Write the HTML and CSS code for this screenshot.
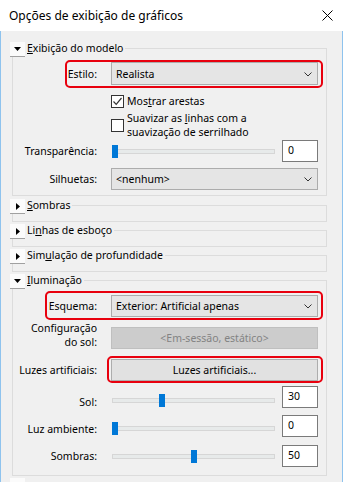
FILE: index.html
```html
<!DOCTYPE html>
<html lang="pt">
<head>
    <meta charset="UTF-8">
    <meta name="viewport" content="width=device-width, initial-scale=1.0">
    <link rel="stylesheet" href="styles.css">

    <title>Opções de exibição de gráficos</title>
</head>
<body>

    <div class="window">
        <div class="title-bar">
            <span class="title">Opções de exibição de gráficos</span>
            <svg class="close" width="11" height="11" viewBox="0 0 11 11">
                <path d="M0.5 0.5 L10.5 10.5 M10.5 0.5 L0.5 10.5" stroke="#000" stroke-width="1" fill="none"/>
            </svg>
        </div>

        <div class="content">

            <!-- Exibição do modelo -->
            <div class="section">
                <div class="section-head">
                    <span class="toggle"><svg width="7" height="4" viewBox="0 0 7 4"><polygon points="0,0 7,0 3.5,4" fill="#000"/></svg></span>
                    <span class="section-title"><u>E</u>xibição do modelo</span>
                    <span class="section-line"></span>
                </div>
                <div class="section-body model-body">
                    <div class="row row-style">
                        <span class="label">Estilo:</span>
                        <div class="dropdown">Realista
                            <svg class="chevron" width="8" height="5" viewBox="0 0 8 5"><path d="M0.5 0.5 L4 4 L7.5 0.5" stroke="#333" fill="none"/></svg>
                        </div>
                        <span class="highlight hl-style"></span>
                    </div>
                    <div class="row row-edges">
                        <span></span>
                        <div class="check">
                            <span class="box"><svg width="11" height="11" viewBox="0 0 11 11"><path d="M1.5 5.5 L4.2 8.3 L9.5 2" stroke="#333" stroke-width="1.2" fill="none"/></svg></span>
                            <span>Mos<u>t</u>rar arestas</span>
                        </div>
                    </div>
                    <div class="row row-smooth">
                        <span></span>
                        <div class="check">
                            <span class="box"></span>
                            <span class="two-lines">Suavizar as <u>l</u>inhas com a<br>suavização de serrilhado</span>
                        </div>
                    </div>
                    <div class="row row-slider row-transp">
                        <span class="label">Transparência:</span>
                        <div class="slider-group">
                            <div class="slider"><span class="track"></span><span class="thumb" style="--value: 0"></span></div>
                            <div class="textbox">0</div>
                        </div>
                    </div>
                    <div class="row row-silh">
                        <span class="label">Silhuetas:</span>
                        <div class="dropdown">&lt;nenhum&gt;
                            <svg class="chevron" width="8" height="5" viewBox="0 0 8 5"><path d="M0.5 0.5 L4 4 L7.5 0.5" stroke="#333" fill="none"/></svg>
                        </div>
                    </div>
                </div>
            </div>

            <!-- Sombras -->
            <div class="section collapsed first-collapsed">
                <div class="section-head">
                    <span class="toggle"><svg width="4" height="7" viewBox="0 0 4 7"><polygon points="0,0 4,3.5 0,7" fill="#000"/></svg></span>
                    <span class="section-title"><u>S</u>ombras</span>
                    <span class="section-line"></span>
                </div>
                <div class="section-body"></div>
            </div>

            <!-- Linhas de esboço -->
            <div class="section collapsed">
                <div class="section-head">
                    <span class="toggle"><svg width="4" height="7" viewBox="0 0 4 7"><polygon points="0,0 4,3.5 0,7" fill="#000"/></svg></span>
                    <span class="section-title">Li<u>n</u>has de esboço</span>
                    <span class="section-line"></span>
                </div>
                <div class="section-body"></div>
            </div>

            <!-- Simulação de profundidade -->
            <div class="section collapsed">
                <div class="section-head">
                    <span class="toggle"><svg width="4" height="7" viewBox="0 0 4 7"><polygon points="0,0 4,3.5 0,7" fill="#000"/></svg></span>
                    <span class="section-title">Sim<u>u</u>lação de profundidade</span>
                    <span class="section-line"></span>
                </div>
                <div class="section-body"></div>
            </div>

            <!-- Iluminação -->
            <div class="section light-section">
                <div class="section-head">
                    <span class="toggle"><svg width="7" height="4" viewBox="0 0 7 4"><polygon points="0,0 7,0 3.5,4" fill="#000"/></svg></span>
                    <span class="section-title"><u>I</u>luminação</span>
                    <span class="section-line"></span>
                </div>
                <div class="section-body light-body">
                    <div class="row row-scheme">
                        <span class="label">Esquema:</span>
                        <div class="dropdown">Exterior: Artificial apenas
                            <svg class="chevron" width="8" height="5" viewBox="0 0 8 5"><path d="M0.5 0.5 L4 4 L7.5 0.5" stroke="#333" fill="none"/></svg>
                        </div>
                        <span class="highlight hl-scheme"></span>
                    </div>
                    <div class="row row-sun">
                        <span class="label two-lines">Configuração<br>do sol:</span>
                        <div class="button disabled">&lt;Em-sessão, estático&gt;</div>
                    </div>
                    <div class="row row-lights">
                        <span class="label">Luzes artificiais:</span>
                        <div class="button">Luzes artificiais...</div>
                        <span class="highlight hl-lights"></span>
                    </div>
                    <div class="row row-slider row-sol">
                        <span class="label">Sol:</span>
                        <div class="slider-group">
                            <div class="slider"><span class="track"></span><span class="thumb" style="--value: 30"></span></div>
                            <div class="textbox">30</div>
                        </div>
                    </div>
                    <div class="row row-slider row-ambient">
                        <span class="label">Luz ambiente:</span>
                        <div class="slider-group">
                            <div class="slider"><span class="track"></span><span class="thumb" style="--value: 0"></span></div>
                            <div class="textbox">0</div>
                        </div>
                    </div>
                    <div class="row row-slider row-shadows">
                        <span class="label">Sombras:</span>
                        <div class="slider-group">
                            <div class="slider"><span class="track"></span><span class="thumb" style="--value: 50"></span></div>
                            <div class="textbox">50</div>
                        </div>
                    </div>
                </div>
            </div>

            <!-- next section, cut off -->
            <div class="section collapsed">
                <div class="section-head">
                    <span class="toggle"></span>
                </div>
            </div>

        </div>
    </div>

</body>
</html>
```

FILE: styles.css
```css
body {
    margin: 0;
    padding: 0;
    font-family: 'Noto Sans', 'Open Sans', sans-serif;
    font-size: 10.5px;
    color: #000;
    background-color: #f0f0f0;
}

u {
    text-decoration: underline;
    text-underline-offset: 1px;
}

.window {
    width: 343px;
    height: 482px;
    overflow: hidden;
    display: flex;
    flex-direction: column;
    background-color: #f0f0f0;
}

.title-bar {
    height: 31px;
    flex-shrink: 0;
    background-color: #fff;
    display: flex;
    align-items: center;
    justify-content: space-between;
    padding: 0 10px 0 9px;
    box-sizing: border-box;
}

.title {
    font-size: 12px;
}

.content {
    flex: 1;
    border-left: 1px solid #8ec3ee;
    border-right: 1px solid #8ec3ee;
    padding-top: 11px;
}

/* sections */

.section {
    margin-left: 9px;
    width: 317px;
}

.first-collapsed {
    margin-top: 3px;
}

.collapsed + .collapsed,
.collapsed + .light-section,
.light-section + .collapsed {
    margin-top: 2px;
}

.section-head {
    display: flex;
    height: 15px;
}

.toggle {
    width: 15px;
    height: 15px;
    flex-shrink: 0;
    box-sizing: border-box;
    background-color: #fbfbfb;
    border-bottom: 1px solid #a0a0a0;
    display: flex;
    align-items: center;
    justify-content: center;
}

.section-title {
    margin-left: 2px;
    line-height: 13px;
    white-space: nowrap;
}

.section-line {
    flex: 1;
    margin: 6px 0 0 2px;
    border-top: 1px solid #dcdcdc;
    border-right: 1px solid #dcdcdc;
}

.section-body {
    margin-left: 2px;
    border: 1px solid #dcdcdc;
    border-top: none;
}

.collapsed .section-body {
    height: 7px;
}

.model-body {
    padding: 5px 8px 5px 0;
}

.light-body {
    padding: 6px 8px 8px 0;
}

/* rows */

.row {
    position: relative;
    display: grid;
    grid-template-columns: 84px 1fr;
    column-gap: 14px;
    align-items: center;
}

.label {
    text-align: right;
    white-space: nowrap;
}

.two-lines {
    line-height: 14px;
}

.row-edges { margin-top: 8px; height: 16px; }
.row-smooth { margin-top: 2px; height: 28px; }
.row-transp { margin-top: 1px; }
.row-silh { margin-top: 6px; }

.row-sun {
    margin-top: 4px;
    align-items: end;
}
.row-lights { margin-top: 10px; }
.row-sol { margin-top: 8px; }
.row-ambient, .row-shadows { margin-top: 6px; }

.row-sol .label { padding-top: 3px; }
.row-ambient .label { padding-top: 2px; }

/* the value boxes sit a little higher than their sliders */
.row-sol .textbox { margin-bottom: 6px; }
.row-ambient .textbox { margin-bottom: 4px; }

/* controls */

.dropdown {
    position: relative;
    height: 23px;
    box-sizing: border-box;
    background-color: #e5e5e5;
    border: 1px solid #acacac;
    padding-left: 4px;
    display: flex;
    align-items: center;
    white-space: nowrap;
}

.row-silh .dropdown,
.row-scheme .dropdown {
    height: 22px;
}

.chevron {
    position: absolute;
    right: 5px;
    top: 50%;
    margin-top: -2px;
}

.check {
    display: flex;
    align-items: center;
}

.box {
    width: 13px;
    height: 13px;
    box-sizing: border-box;
    border: 1px solid #333;
    background-color: #fff;
    margin-right: 3px;
    flex-shrink: 0;
    display: flex;
}

.slider-group {
    display: flex;
    align-items: center;
    gap: 6px;
    height: 22px;
}

.slider {
    position: relative;
    flex: 1;
    height: 13px;
}

.track {
    position: absolute;
    left: 1px;
    right: 1px;
    top: 4px;
    height: 5px;
    box-sizing: border-box;
    background-color: #e7eaea;
    border: 1px solid #d6d6d6;
}

.thumb {
    position: absolute;
    top: 0;
    left: calc(1px + (100% - 8px) * var(--value) / 100);
    width: 6px;
    height: 13px;
    background-color: #0078d7;
}

.textbox {
    width: 36px;
    height: 22px;
    flex-shrink: 0;
    box-sizing: border-box;
    border: 1px solid #7a7a7a;
    background-color: #fff;
    padding: 2px 0 0 5px;
    line-height: 14px;
}

.button {
    height: 22px;
    box-sizing: border-box;
    background-color: #e1e1e1;
    border: 1px solid #adadad;
    display: flex;
    align-items: center;
    justify-content: center;
    white-space: nowrap;
}

.button.disabled {
    background-color: #cccccc;
    border-color: #bfbfbf;
    color: #838383;
}

/* red annotation outlines */

.highlight {
    position: absolute;
    border: 2px solid #e8000e;
    border-radius: 5px;
    pointer-events: none;
}

.hl-style {
    left: 52px;
    right: -5px;
    top: -2px;
    bottom: -3px;
}

.hl-scheme {
    left: 32px;
    right: -5px;
    top: -4px;
    bottom: -3px;
}

.hl-lights {
    left: 94px;
    right: -5px;
    top: -3px;
    bottom: -2px;
}
```
